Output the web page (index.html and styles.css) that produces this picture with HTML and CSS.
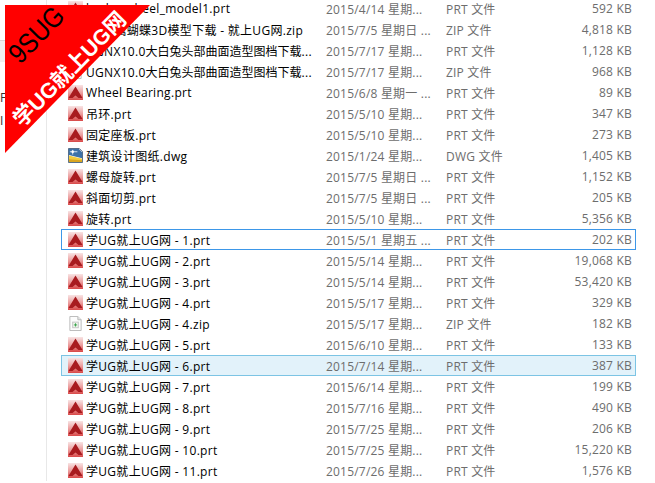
FILE: index.html
```html
<!DOCTYPE html>
<html lang="zh-CN">

<head>
    <meta charset="UTF-8">
    <title>学UG就上UG网</title>
    <link rel="stylesheet" href="styles.css">
</head>

<body>
    <!-- shared file icons -->
    <svg class="defs" width="0" height="0">
        <defs>
            <linearGradient id="prtBg" x1="0" y1="0" x2="0" y2="1">
                <stop offset="0" stop-color="#f8e4e4" />
                <stop offset="0.55" stop-color="#eb9a9a" />
                <stop offset="1" stop-color="#d84848" />
            </linearGradient>
            <symbol id="prt" viewBox="0 0 15 15">
                <rect width="15" height="15" fill="url(#prtBg)" />
                <path d="M7.5 1.5 L14.5 13 L10.5 13 L7.5 10.5 L4.5 13 L0.5 13 Z" fill="#a81b1f" />
            </symbol>
            <symbol id="dwg" viewBox="0 0 16 16">
                <path d="M0.5 0.5 H12 L15.5 4 V15.5 H0.5 Z" fill="#fff" stroke="#46617f" />
                <path d="M1 1 H11.5 L15 4.5 V11 L1 7.5 Z" fill="#3d72a8" />
                <path d="M1 8 L15 11.5 V15 H1 Z" fill="#f3cc3e" />
                <path d="M1 12 L15 13 V15 H1 Z" fill="#d9a520" />
                <path d="M2 4 H10 M5 2 V7" stroke="#dfeaf5" fill="none" />
                <circle cx="5" cy="4" r="1.4" fill="#fff" />
            </symbol>
            <symbol id="zip" viewBox="0 0 15 16">
                <path d="M1.5 0.5 H10 L13.5 4 V15.5 H1.5 Z" fill="#fdfdfd" stroke="#b8b8b8" />
                <path d="M10 0.5 V4 H13.5" fill="#e8e8e8" stroke="#b8b8b8" />
                <rect x="4.5" y="6.5" width="6" height="6" fill="#eef5ea" stroke="#c4c4c4" />
                <path d="M7.5 7.8 V11.2 M5.8 9.5 H9.2" stroke="#35a04a" />
            </symbol>
        </defs>
    </svg>

    <div class="explorer">
        <div class="nav-pane">
            <div class="nav-selected"></div>
            <div class="nav-item nav-f">F</div>
            <div class="nav-item">I</div>
        </div>

        <div class="file-list">
            <div class="row"><svg class="icon"><use href="#prt" /></svg><span class="name">brake_wheel_model1.prt</span><span class="date">2015/4/14 星期...</span><span class="type">PRT 文件</span><span class="size">592 KB</span></div>
            <div class="row"><svg class="icon"><use href="#zip" /></svg><span class="name">3D金属蝴蝶3D模型下载 - 就上UG网.zip</span><span class="date">2015/7/5 星期日 ...</span><span class="type">ZIP 文件</span><span class="size">4,818 KB</span></div>
            <div class="row"><svg class="icon"><use href="#prt" /></svg><span class="name">UGNX10.0<span class="cjk">大白兔头部曲面造型图档下载</span>...</span><span class="date">2015/7/17 星期...</span><span class="type">PRT 文件</span><span class="size">1,128 KB</span></div>
            <div class="row"><svg class="icon"><use href="#zip" /></svg><span class="name">UGNX10.0<span class="cjk">大白兔头部曲面造型图档下载</span>...</span><span class="date">2015/7/17 星期...</span><span class="type">ZIP 文件</span><span class="size">968 KB</span></div>
            <div class="row"><svg class="icon"><use href="#prt" /></svg><span class="name">Wheel Bearing.prt</span><span class="date">2015/6/8 星期一 ...</span><span class="type">PRT 文件</span><span class="size">89 KB</span></div>
            <div class="row"><svg class="icon"><use href="#prt" /></svg><span class="name">吊环.prt</span><span class="date">2015/5/10 星期...</span><span class="type">PRT 文件</span><span class="size">347 KB</span></div>
            <div class="row"><svg class="icon"><use href="#prt" /></svg><span class="name">固定座板.prt</span><span class="date">2015/5/10 星期...</span><span class="type">PRT 文件</span><span class="size">273 KB</span></div>
            <div class="row"><svg class="icon"><use href="#dwg" /></svg><span class="name">建筑设计图纸.dwg</span><span class="date">2015/1/24 星期...</span><span class="type">DWG 文件</span><span class="size">1,405 KB</span></div>
            <div class="row"><svg class="icon"><use href="#prt" /></svg><span class="name">螺母旋转.prt</span><span class="date">2015/7/5 星期日 ...</span><span class="type">PRT 文件</span><span class="size">1,152 KB</span></div>
            <div class="row"><svg class="icon"><use href="#prt" /></svg><span class="name">斜面切剪.prt</span><span class="date">2015/7/5 星期日 ...</span><span class="type">PRT 文件</span><span class="size">205 KB</span></div>
            <div class="row"><svg class="icon"><use href="#prt" /></svg><span class="name">旋转.prt</span><span class="date">2015/5/10 星期...</span><span class="type">PRT 文件</span><span class="size">5,356 KB</span></div>
            <div class="row focused"><svg class="icon"><use href="#prt" /></svg><span class="name">学UG就上UG网 - 1.prt</span><span class="date">2015/5/1 星期五 ...</span><span class="type">PRT 文件</span><span class="size">202 KB</span></div>
            <div class="row"><svg class="icon"><use href="#prt" /></svg><span class="name">学UG就上UG网 - 2.prt</span><span class="date">2015/5/14 星期...</span><span class="type">PRT 文件</span><span class="size">19,068 KB</span></div>
            <div class="row"><svg class="icon"><use href="#prt" /></svg><span class="name">学UG就上UG网 - 3.prt</span><span class="date">2015/5/14 星期...</span><span class="type">PRT 文件</span><span class="size">53,420 KB</span></div>
            <div class="row"><svg class="icon"><use href="#prt" /></svg><span class="name">学UG就上UG网 - 4.prt</span><span class="date">2015/5/17 星期...</span><span class="type">PRT 文件</span><span class="size">329 KB</span></div>
            <div class="row"><svg class="icon"><use href="#zip" /></svg><span class="name">学UG就上UG网 - 4.zip</span><span class="date">2015/5/17 星期...</span><span class="type">ZIP 文件</span><span class="size">182 KB</span></div>
            <div class="row"><svg class="icon"><use href="#prt" /></svg><span class="name">学UG就上UG网 - 5.prt</span><span class="date">2015/6/10 星期...</span><span class="type">PRT 文件</span><span class="size">133 KB</span></div>
            <div class="row selected"><svg class="icon"><use href="#prt" /></svg><span class="name">学UG就上UG网 - 6.prt</span><span class="date">2015/7/14 星期...</span><span class="type">PRT 文件</span><span class="size">387 KB</span></div>
            <div class="row"><svg class="icon"><use href="#prt" /></svg><span class="name">学UG就上UG网 - 7.prt</span><span class="date">2015/6/14 星期...</span><span class="type">PRT 文件</span><span class="size">199 KB</span></div>
            <div class="row"><svg class="icon"><use href="#prt" /></svg><span class="name">学UG就上UG网 - 8.prt</span><span class="date">2015/7/16 星期...</span><span class="type">PRT 文件</span><span class="size">490 KB</span></div>
            <div class="row"><svg class="icon"><use href="#prt" /></svg><span class="name">学UG就上UG网 - 9.prt</span><span class="date">2015/7/25 星期...</span><span class="type">PRT 文件</span><span class="size">206 KB</span></div>
            <div class="row"><svg class="icon"><use href="#prt" /></svg><span class="name">学UG就上UG网 - 10.prt</span><span class="date">2015/7/25 星期...</span><span class="type">PRT 文件</span><span class="size">15,220 KB</span></div>
            <div class="row"><svg class="icon"><use href="#prt" /></svg><span class="name">学UG就上UG网 - 11.prt</span><span class="date">2015/7/26 星期...</span><span class="type">PRT 文件</span><span class="size">1,576 KB</span></div>
        </div>
    </div>

    <!-- corner ribbon over the screenshot -->
    <svg class="ribbon" viewBox="0 0 150 150" width="150" height="150">
        <polygon points="0,0 145,0 0,148" fill="#ff0000" />
        <text class="ribbon-brand" transform="translate(15,60) rotate(-45.5)" textLength="66" lengthAdjust="spacingAndGlyphs">9SUG</text>
        <text class="ribbon-title" transform="translate(17,123) rotate(-45.5)">学UG就上UG网</text>
    </svg>
</body>

</html>
```

FILE: styles.css
```css
/* General styles */
html,
body {
    margin: 0;
    padding: 0;
    height: 483px;
    overflow: hidden;
    background: #ffffff;
}

body {
    font-family: 'Open Sans', 'Noto Sans CJK SC', sans-serif;
    font-size: 12px;
}

.defs {
    display: block;
    height: 0;
}

.explorer {
    display: flex;
    height: 481px;
}

/* Left navigation pane */
.nav-pane {
    width: 46px;
    flex: none;
    border-right: 1px solid #e8e8e8;
    color: #333333;
}

.nav-selected {
    height: 21px;
    margin-top: 40px;
    background: #f0f0f0;
    border-top: 1px solid #d8d8d8;
}

.nav-item {
    height: 23px;
    line-height: 23px;
}

.nav-f {
    margin-top: 24px;
}

/* File rows */
.file-list {
    margin-top: -2px;
    margin-left: 14px;
    width: 575px;
    flex: none;
}

.row {
    display: grid;
    grid-template-columns: 24px 240px 120px 60px 1fr;
    box-sizing: border-box;
    height: 21px;
    align-items: center;
    padding-right: 3px;
    border: 1px solid transparent;
    white-space: nowrap;
    color: #6d6d6d;
    letter-spacing: 0.2px;
}

.row .icon {
    width: 15px;
    height: 15px;
    margin-left: 6px;
}

.row .name {
    color: #000000;
    letter-spacing: 0.3px;
}

.row .cjk {
    letter-spacing: 0;
}

.row .size {
    text-align: right;
}

.row.focused {
    border-color: #3d97e8;
}

.row.selected {
    background: #e2f2fa;
    border-color: #7cc4e4;
}

/* Corner ribbon */
.ribbon {
    position: absolute;
    left: 5px;
    top: 5px;
}

.ribbon-brand {
    font-family: 'Liberation Sans', sans-serif;
    font-size: 28px;
    fill: #000000;
}

.ribbon-title {
    font-family: 'Liberation Sans', 'Noto Sans CJK SC', sans-serif;
    font-size: 21.5px;
    font-weight: 700;
    fill: #ffffff;
}
```
